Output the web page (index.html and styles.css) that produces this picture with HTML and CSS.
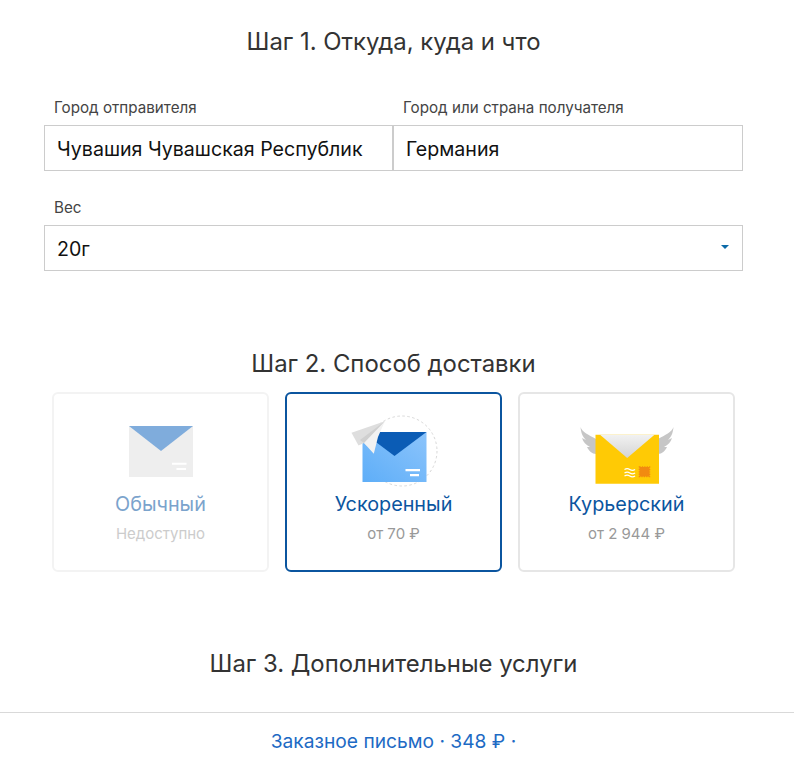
FILE: index.html
```html
<!DOCTYPE html>
<html lang="ru">
<head>
<meta charset="utf-8">
<title>Калькулятор</title>
<link rel="stylesheet" href="styles.css">
</head>
<body>
<main class="page">
  <h2 class="step step-one">Шаг 1. Откуда, куда и что</h2>
  <div class="fields">
    <div class="field field-from">
      <label class="label">Город отправителя</label>
      <div class="input">Чувашия Чувашская Республик</div>
    </div>
    <div class="field">
      <label class="label">Город или страна получателя</label>
      <div class="input">Германия</div>
    </div>
  </div>
  <div class="field field-weight">
    <label class="label">Вес</label>
    <div class="input">20г<span class="caret"></span></div>
  </div>

  <h2 class="step step-two">Шаг 2. Способ доставки</h2>
  <div class="cards">
    <div class="card card-off">
      <svg class="icon" width="120" height="70" viewBox="0 0 120 70">
        <rect x="28" y="10" width="64" height="51" fill="#eeeeee"/>
        <path d="M28 10h64L60 35z" fill="#7facdc"/>
        <path d="M71 46.7h14.500v2H71zM75.500 52H85v2h-9.500z" fill="#fff"/>
      </svg>
      <div class="card-name">Обычный</div>
      <div class="card-price">Недоступно</div>
    </div>
    <div class="card card-active">
      <svg class="icon" width="120" height="70" viewBox="0 0 120 70">
        <defs>
          <linearGradient id="blue" x1="0" y1="1" x2="1" y2="0">
            <stop offset="0" stop-color="#5eaef8"/>
            <stop offset="1" stop-color="#8cc4fb"/>
          </linearGradient>
        </defs>
        <circle cx="68" cy="35" r="35" fill="none" stroke="#d8d8d8" stroke-width="1" stroke-dasharray="2.500 2.500"/>
        <rect x="28.500" y="16" width="64" height="50" fill="url(#blue)"/>
        <path d="M28.500 16h64L60.500 40z" fill="#0b5cb5"/>
        <path d="M71.500 53H86v2.300H71.500zM76 58h9v2.300h-9z" fill="#fff"/>
        <path d="M17.500 16.700L50.800 5.300 30 27 24.500 29.500z" fill="#dedede"/>
        <path d="M50.800 5.300L26 24 30 27 33 30z" fill="#cfcfcf"/>
        <path d="M50.800 5.300L30 27 39.800 37.700 44 21z" fill="#f2f2f2"/>
      </svg>
      <div class="card-name">Ускоренный</div>
      <div class="card-price">от 70 ₽</div>
    </div>
    <div class="card">
      <svg class="icon" width="120" height="70" viewBox="0 0 120 70">
        <defs>
          <linearGradient id="flap" x1="0" y1="0" x2="0" y2="1">
            <stop offset="0" stop-color="#f2f2f2"/>
            <stop offset="1" stop-color="#d4d4d4"/>
          </linearGradient>
        </defs>
        <path d="M13.500 11C15 16 22 19 29 23V38C25 38 22 35 20 31L23 31C19 29 16 26 15 22L19 24C15 20 14 16 13.500 11z" fill="#c6c6c6"/>
        <path d="M106.500 11C105 16 98 19 91 23V38C95 38 98 35 100 31L97 31C101 29 104 26 105 22L101 24C105 20 106 16 106.500 11z" fill="#c6c6c6"/>
        <path d="M28.500 18.700L92 18.700V67.700H28.500z" fill="#ffca05"/>
        <path d="M33 18.700H87.500L60.200 42z" fill="url(#flap)"/>
        <path d="M57.500 53.500q2.700-1.800 5.300 0t5.300 0M57.500 57q2.700-1.800 5.300 0t5.300 0M57.500 60q2.700-1.800 5.300 0t5.300 0" fill="none" stroke="#fff" stroke-width="1.200"/>
        <rect x="72.500" y="51" width="10" height="9.500" fill="#f28a10" stroke="#f28a10" stroke-width="1.600" stroke-dasharray="1.200 1.200"/>
      </svg>
      <div class="card-name">Курьерский</div>
      <div class="card-price">от 2 944 ₽</div>
    </div>
  </div>

  <h2 class="step step-three">Шаг 3. Дополнительные услуги</h2>
</main>
<footer class="summary">Заказное письмо · 348 ₽ ·</footer>
</body>
</html>
```

FILE: styles.css
```css
html, body {
  margin: 0;
  padding: 0;
  background: #fff;
}
body {
  height: 763px;
  overflow: hidden;
  font-family: Inter, "Noto Sans", sans-serif;
  color: #333;
  display: flex;
  flex-direction: column;
}
.page {
  flex: 1;
  padding: 0 51px 0 44px;
}
.step {
  margin: 0;
  font-size: 23.9px;
  line-height: 30px;
  font-weight: 400;
  text-align: center;
  color: #333;
}
.step-one { padding-top: 27px; }
.step-two { padding-top: 78px; }
.step-three { padding-top: 77px; }
.fields {
  display: flex;
  margin-top: 42px;
}
.field { flex: 1 1 0; min-width: 0; }
.field-from { flex: 0 0 349px; }
.field-weight { margin-top: 28px; }
.label {
  display: block;
  font-size: 15.2px;
  line-height: 18px;
  padding-left: 10px;
  margin-bottom: 8px;
  color: #444;
}
.input {
  position: relative;
  box-sizing: border-box;
  height: 46px;
  padding: 0 12px;
  border: 1px solid #ccc;
  font-size: 19.6px;
  line-height: 46px;
  color: #111;
  white-space: nowrap;
  overflow: hidden;
}
.caret {
  position: absolute;
  right: 13px;
  top: 19px;
  width: 0;
  height: 0;
  border-left: 4px solid transparent;
  border-right: 4px solid transparent;
  border-top: 4px solid #0b6aa8;
}
.cards {
  display: flex;
  gap: 16px;
  margin: 13px 8px 0;
}
.card {
  box-sizing: border-box;
  width: 217px;
  height: 180px;
  border: 2px solid #e6e6e6;
  border-radius: 6px;
  display: flex;
  flex-direction: column;
  align-items: center;
  padding-top: 22px;
}
.card-off { border-color: #f3f3f3; }
.card-active { border-color: #0b559f; }
.icon { display: block; overflow: visible; }
.card-name {
  margin-top: 5px;
  font-size: 19.8px;
  line-height: 26px;
  color: #0b559f;
}
.card-off .card-name { color: #7ba3cc; }
.card-price {
  margin-top: 7px;
  font-size: 15px;
  line-height: 20px;
  color: #999;
}
.card-off .card-price { color: #ccc; }
.summary {
  box-sizing: border-box;
  height: 51px;
  padding-right: 7px;
  border-top: 1px solid #d9d9d9;
  text-align: center;
  font-size: 19.2px;
  line-height: 57px;
  color: #1d6ac4;
}
```
